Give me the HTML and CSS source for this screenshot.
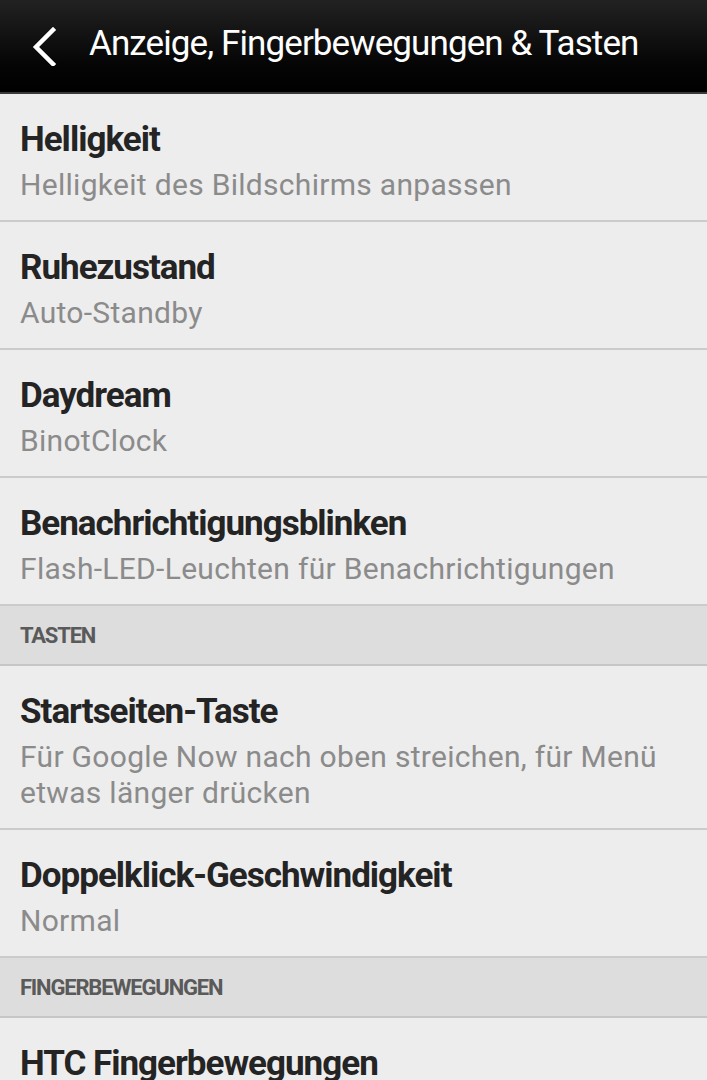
FILE: index.html
```html
<!DOCTYPE html>
<html lang="de">
<head>
    <meta charset="UTF-8">
    <meta name="viewport" content="width=device-width, initial-scale=1.0">
    <title>Anzeige, Fingerbewegungen &amp; Tasten</title>
    <link rel="stylesheet" href="styles.css">
</head>
<body>

<div class="header">
    <button class="back" aria-label="Zurück">
        <svg width="30" height="40" viewBox="0 0 30 40">
            <polyline points="23,4 6,21 23,38" fill="none" stroke="#fff" stroke-width="4.5" stroke-linecap="square"/>
        </svg>
    </button>
    <h1>Anzeige, Fingerbewegungen &amp; Tasten</h1>
</div>

<div class="liste">
    <div class="eintrag">
        <div class="titel">Helligkeit</div>
        <div class="info">Helligkeit des Bildschirms anpassen</div>
    </div>
    <div class="eintrag">
        <div class="titel">Ruhezustand</div>
        <div class="info">Auto-Standby</div>
    </div>
    <div class="eintrag">
        <div class="titel">Daydream</div>
        <div class="info">BinotClock</div>
    </div>
    <div class="eintrag">
        <div class="titel">Benachrichtigungsblinken</div>
        <div class="info">Flash-LED-Leuchten für Benachrichtigungen</div>
    </div>

    <div class="abschnitt">TASTEN</div>

    <div class="eintrag">
        <div class="titel">Startseiten-Taste</div>
        <div class="info">Für Google Now nach oben streichen, für Menü etwas länger drücken</div>
    </div>
    <div class="eintrag">
        <div class="titel">Doppelklick-Geschwindigkeit</div>
        <div class="info">Normal</div>
    </div>

    <div class="abschnitt">FINGERBEWEGUNGEN</div>

    <div class="eintrag">
        <div class="titel">HTC Fingerbewegungen</div>
    </div>
</div>

</body>
</html>
```

FILE: styles.css
```css
body {
    font-family: Roboto, "Liberation Sans", sans-serif;
    margin: 0;
    padding: 0;
    background-color: #ededed;
    overflow: hidden;
}
.header {
    height: 92px;
    display: flex;
    align-items: center;
    background: linear-gradient(#222222, #050505 70%, #000000);
    border-bottom: 2px solid #3a3a3a;
    color: white;
}
.header .back {
    background: none;
    border: none;
    padding: 0;
    margin: 0 29px 0 30px;
    width: 30px;
    height: 40px;
    cursor: pointer;
}
.header h1 {
    margin: 0;
    font-size: 35px;
    font-weight: normal;
    letter-spacing: -0.9px;
    line-height: 1;
    padding-bottom: 5px;
}
.eintrag {
    padding: 23px 20px 17px;
    border-bottom: 2px solid #cbcbcb;
}
.titel {
    font-size: 35px;
    font-weight: bold;
    line-height: 46px;
    color: #242424;
    letter-spacing: -1px;
}
.info {
    margin-top: 4px;
    font-size: 30px;
    line-height: 36px;
    color: #8b8b8b;
    letter-spacing: 0.3px;
}
.abschnitt {
    height: 58px;
    line-height: 60px;
    padding: 0 20px;
    background-color: #dddddd;
    border-bottom: 2px solid #c6c6c6;
    color: #5a5a5a;
    font-size: 22px;
    font-weight: bold;
    letter-spacing: -1.2px;
}
```
